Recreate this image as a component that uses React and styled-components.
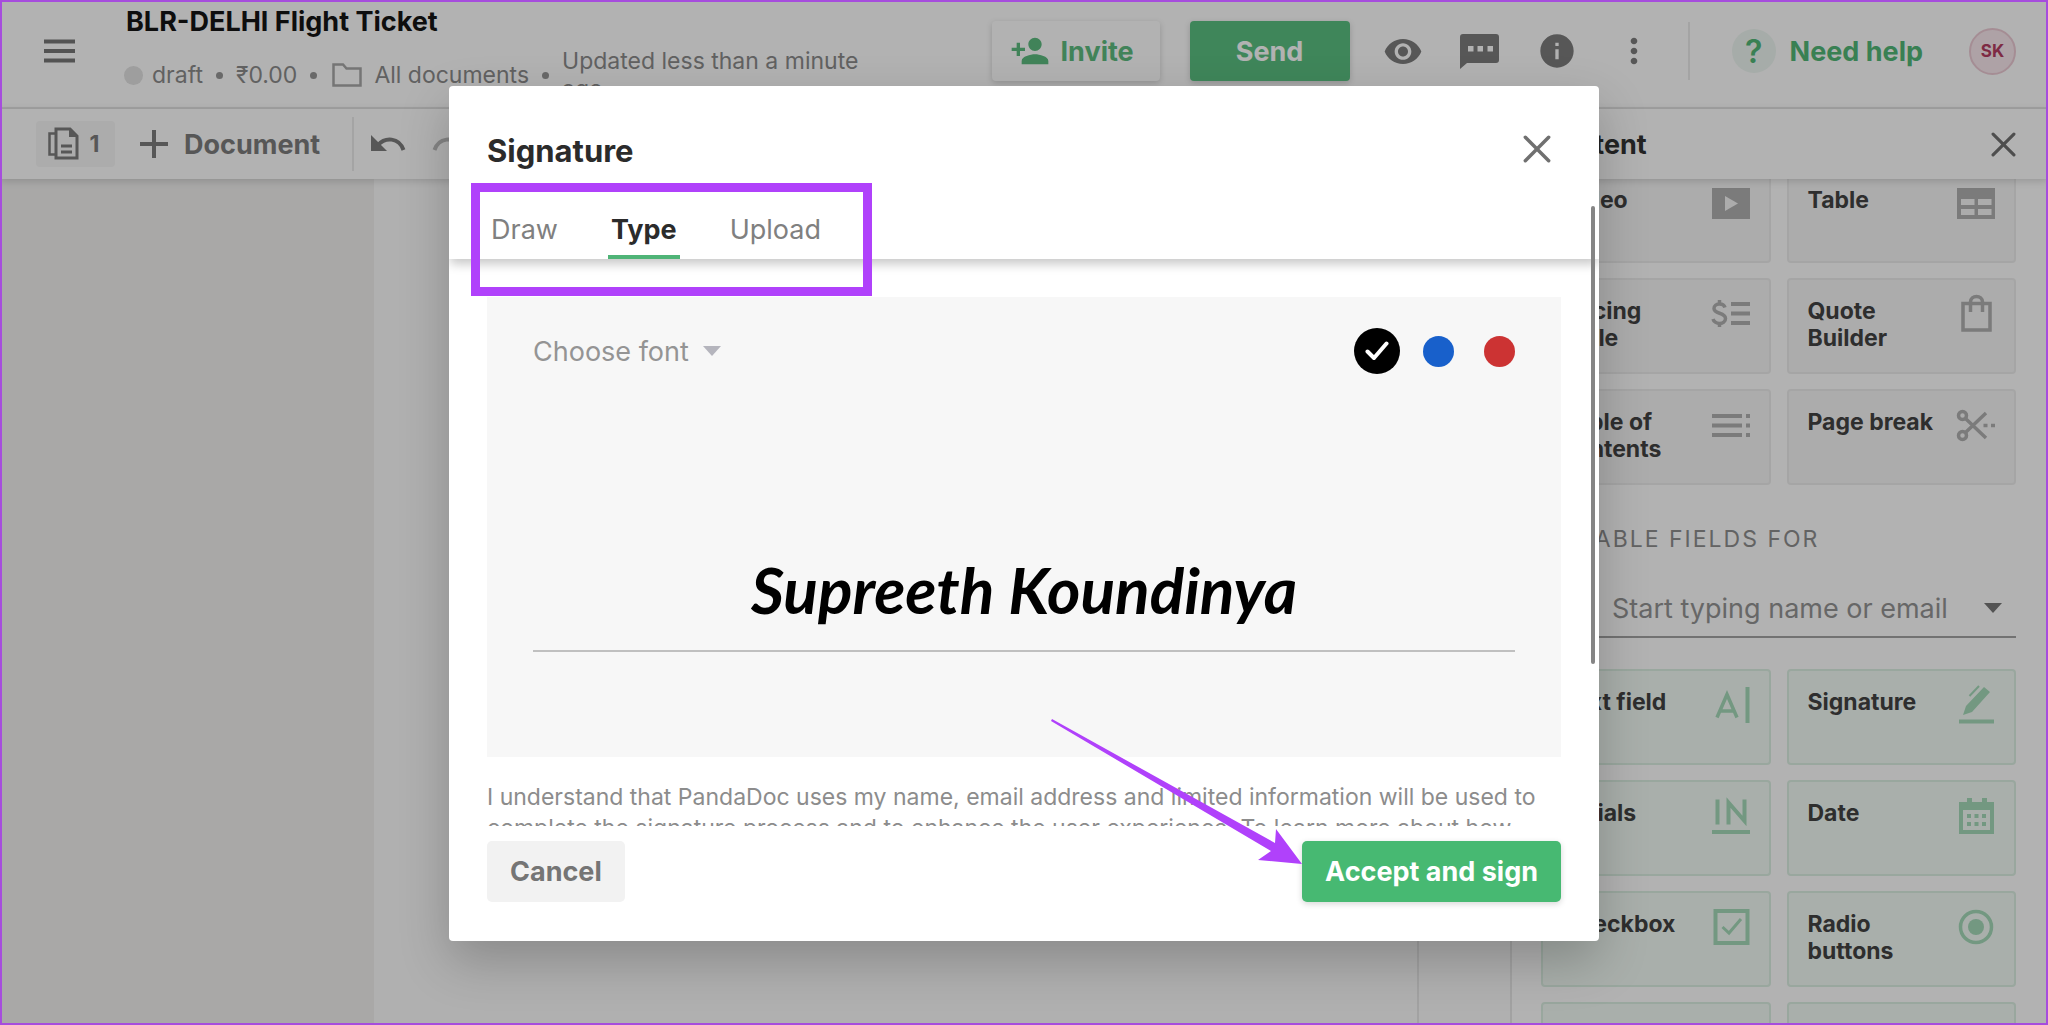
import React, { useState } from "react";
import styled, { createGlobalStyle, css } from "styled-components";
import { MdVisibility, MdInfo, MdMoreVert, MdPersonAdd } from "react-icons/md";

const GlobalStyle = createGlobalStyle`
  *, *::before, *::after { box-sizing: border-box; }
  html, body, #root { height: 100%; }
  body { margin: 0; overflow: hidden; font-family: Inter, "Liberation Sans", sans-serif; color: #333; }
  button, input, select { font: inherit; color: inherit; }
  button { background: none; border: 0; padding: 0; cursor: pointer; }
  h1, h2, p { margin: 0; }
`;

const Frame = styled.div`
  position: relative;
  height: 100vh;
  display: flex;
  flex-direction: column;
  background: #fff;
  overflow: hidden;
  &::after {
    content: "";
    position: absolute;
    inset: 0;
    border: 2px solid #a64ddd;
    pointer-events: none;
    z-index: 5;
  }
`;

const Header = styled.header`
  display: flex;
  align-items: flex-start;
  height: 109px;
  flex: none;
  padding: 0 32px 0 36px;
  border-bottom: 2px solid #e8e8e8;
`;

const MenuButton = styled.button`
  display: flex;
  margin: 28px 42px 0 0;
  color: #777;
`;

const TitleBlock = styled.div`
  display: flex;
  flex-direction: column;
  gap: 6px;
  padding-top: 6px;
  flex: 1;
  min-width: 0;
`;

const DocTitle = styled.h1`
  font-size: 27px;
  line-height: 32px;
  font-weight: 700;
  color: #151515;
`;

const Meta = styled.div`
  display: flex;
  align-items: center;
  height: 62px;
  font-size: 23px;
  line-height: 28px;
  color: #8c8c8c;
  white-space: nowrap;
`;

const StatusDot = styled.span`
  width: 19px;
  height: 19px;
  margin: 0 9px 0 -2px;
  border-radius: 50%;
  background: #e2e2e2;
`;

const Bullet = styled.span`
  width: 7px;
  height: 7px;
  margin: 0 13px;
  border-radius: 50%;
  background: #979797;
`;

const FolderLink = styled.a`
  display: flex;
  align-items: center;
  gap: 12px;
  margin-left: 2px;
  color: inherit;
  text-decoration: none;
`;

const Updated = styled.span`
  width: 320px;
  white-space: normal;
`;

const Actions = styled.div`
  display: flex;
  align-items: center;
  height: 102px;
  flex: none;
`;

const HeaderButton = styled.button`
  display: flex;
  align-items: center;
  justify-content: center;
  gap: 11px;
  height: 60px;
  width: ${(p) => (p.$primary ? 160 : 168)}px;
  padding-right: ${(p) => (p.$primary ? 0 : 8)}px;
  margin-right: ${(p) => (p.$primary ? 33 : 30)}px;
  border-radius: 4px;
  font-size: 27px;
  font-weight: 700;
  color: ${(p) => (p.$primary ? "#fff" : "#5dbc80")};
  background: ${(p) => (p.$primary ? "#5bc182" : "#fff")};
  box-shadow: 0 2px 6px rgba(0, 0, 0, 0.18);
`;

const IconGroup = styled.div`
  display: flex;
  gap: 37px;
  color: #7d7d7d;
`;

const IconButton = styled.button`
  display: flex;
  align-items: center;
  justify-content: center;
  width: 40px;
  height: 44px;
`;

const Divider = styled.span`
  width: 2px;
  height: ${(p) => p.$height}px;
  margin: ${(p) => p.$margin};
  background: #ebebeb;
`;

const HelpButton = styled.button`
  display: flex;
  align-items: center;
  gap: 14px;
  font-size: 27px;
  font-weight: 700;
  color: #52b878;
  white-space: nowrap;
`;

const HelpMark = styled.span`
  display: grid;
  place-items: center;
  width: 44px;
  height: 44px;
  border-radius: 50%;
  background: #eef7f2;
  font-size: 32px;
  font-weight: 600;
`;

const Avatar = styled.button`
  width: 47px;
  height: 47px;
  margin-left: 46px;
  border: 2px solid #eccbd5;
  border-radius: 50%;
  background: #f9e9ee;
  font-size: 17px;
  font-weight: 700;
  color: #b53d62;
`;

const Work = styled.div`
  display: flex;
  flex: 1;
  min-height: 0;
`;

const Editor = styled.div`
  display: flex;
  flex-direction: column;
  flex: 1;
  min-width: 0;
`;

const Toolbar = styled.div`
  display: flex;
  align-items: center;
  flex: none;
  height: 70px;
  padding-left: 36px;
  color: #7d7d7d;
  font-size: 27px;
  font-weight: 700;
  box-shadow: 0 2px 8px rgba(0, 0, 0, 0.16);
  z-index: 1;
`;

const PagesButton = styled.button`
  display: flex;
  align-items: center;
  justify-content: center;
  gap: 11px;
  width: 79px;
  height: 46px;
  padding-right: 4px;
  border-radius: 4px;
  background: #f6f6f6;
  font-size: 23px;
`;

const AddButton = styled.button`
  display: flex;
  align-items: center;
  gap: 16px;
  margin-left: 25px;
`;

const HistoryButton = styled.button`
  display: flex;
  margin-right: 26px;
  opacity: ${(p) => (p.disabled ? 0.5 : 1)};
`;

const Canvas = styled.main`
  display: flex;
  flex: 1;
  background: #f2f1f0;
`;

const Gutter = styled.div`
  width: 374px;
`;

const Paper = styled.div`
  flex: 1;
  background: #fdfdfd;
`;

const Rail = styled.div`
  width: 93px;
  background: #fdfdfd;
  border-left: 2px solid #e8e8e8;
`;

const Panel = styled.aside`
  display: flex;
  flex-direction: column;
  flex: none;
  width: 538px;
  border-left: 2px solid #e8e8e8;
`;

const PanelHead = styled.div`
  display: flex;
  align-items: center;
  justify-content: space-between;
  flex: none;
  height: 70px;
  padding: 0 32px 0 29px;
  box-shadow: 0 2px 8px rgba(0, 0, 0, 0.16);
  z-index: 1;
`;

const PanelTitle = styled.h2`
  font-size: 27px;
  font-weight: 700;
`;

const PanelBody = styled.div`
  flex: 1;
  overflow: hidden;
  padding: 0 32px 0 29px;
`;

const CardGrid = styled.div`
  display: grid;
  grid-template-columns: 1fr 1fr;
  gap: 15px 16px;
  margin-top: ${(p) => (p.$scrolled ? "-12px" : "31px")};
`;

const Card = styled.button`
  display: flex;
  align-items: flex-start;
  justify-content: space-between;
  gap: 14px;
  height: 96px;
  padding: 18px 18px 0 19px;
  border: 2px solid ${(p) => (p.$field ? "#dcefe3" : "#ededed")};
  border-radius: 4px;
  background: ${(p) => (p.$field ? "#f2fbf5" : "#f7f7f7")};
  color: ${(p) => (p.$field ? "#a5dab9" : "#b0b0b0")};
  text-align: left;
`;

const CardArt = styled.svg`
  flex: none;
  width: 40px;
  height: 40px;
  margin-top: -4px;
`;

const CardLabel = styled.span`
  font-size: 23px;
  line-height: 27px;
  font-weight: 700;
  color: #434343;
`;

const FieldsFor = styled.label`
  display: block;
  margin-top: 40px;
  font-size: 23px;
  line-height: 28px;
  letter-spacing: 2px;
  color: #8f8f8f;
`;

const Recipient = styled.div`
  display: flex;
  align-items: center;
  height: 66px;
  margin-top: 19px;
  padding: 8px 14px 0 71px;
  border-bottom: 2px solid #a4a4a4;
  color: #777;
`;

const RecipientInput = styled.input`
  flex: 1;
  min-width: 0;
  border: 0;
  padding: 0;
  background: none;
  font-size: 27px;
  outline: none;
  &::placeholder { color: #949494; opacity: 1; }
`;

const Overlay = styled.div`
  position: absolute;
  inset: 0;
  display: flex;
  align-items: center;
  justify-content: center;
  padding: 86px 5% 84px;
  background: rgba(0, 0, 0, 0.3);
  z-index: 2;
`;

const Modal = styled.section`
  position: relative;
  display: flex;
  flex-direction: column;
  width: 100%;
  max-width: 1150px;
  max-height: 100%;
  border-radius: 4px;
  background: #fff;
  box-shadow: 0 20px 50px rgba(0, 0, 0, 0.22);
`;

const ModalHead = styled.div`
  display: flex;
  align-items: center;
  justify-content: space-between;
  flex: none;
  height: 125px;
  padding: 0 48px 0 38px;
`;

const ModalTitle = styled.h2`
  padding-top: 4px;
  font-size: 31px;
  line-height: 36px;
  font-weight: 700;
  color: #2b2b2b;
`;

const CloseButton = styled.button`
  display: flex;
  color: #707070;
`;

const TabList = styled.div`
  display: flex;
  align-items: flex-end;
  gap: 47px;
  flex: none;
  height: 48px;
  padding-left: 39px;
  box-shadow: 0 6px 10px -1px rgba(0, 0, 0, 0.22);
  clip-path: inset(0 0 -20px 0);
  z-index: 1;
`;

const Tab = styled.button`
  height: 48px;
  padding: 0 3px 8px;
  font-size: 27px;
  color: #808080;
  border-bottom: 4px solid transparent;
  ${(p) =>
    p.$active &&
    css`
      font-weight: 700;
      color: #2b2b2b;
      border-bottom-color: #4fb477;
    `}
`;

const ModalBody = styled.div`
  flex: 1;
  min-height: 0;
  overflow: hidden;
  padding: 38px 38px 40px;
`;

const SignPad = styled.div`
  display: flex;
  flex-direction: column;
  height: 460px;
  padding: 30px 46px 0;
  background: #f7f7f7;
`;

const PadTools = styled.div`
  display: flex;
  align-items: center;
  justify-content: space-between;
  height: 48px;
`;

const FontPicker = styled.label`
  display: flex;
  align-items: center;
  gap: 14px;
  color: #b5b5bd;
`;

const FontSelect = styled.select`
  appearance: none;
  border: 0;
  padding: 0;
  background: none;
  font-size: 27px;
  color: #949494;
`;

const Swatches = styled.div`
  display: flex;
  align-items: center;
  gap: 30px;
`;

const Swatch = styled.label`
  display: grid;
  place-items: center;
  width: ${(p) => (p.$checked ? 46 : 31)}px;
  height: ${(p) => (p.$checked ? 46 : 31)}px;
  margin: ${(p) => (p.$checked ? "0 -7px" : "0")};
  border-radius: 50%;
  background: ${(p) => p.$color};
  color: #fff;
  cursor: pointer;
  input { position: absolute; opacity: 0; width: 1px; height: 1px; margin: 0; }
`;

const SignatureInput = styled.input`
  width: 100%;
  margin-top: 148px;
  height: 129px;
  border: 0;
  border-bottom: 2px solid #c0c0c0;
  padding: 6px 0 0;
  background: none;
  outline: none;
  text-align: center;
  font-family: Lato, "Liberation Sans", cursive;
  font-style: italic;
  font-weight: 700;
  font-size: 64px;
  color: #000;
`;

const Consent = styled.p`
  margin-top: 25px;
  font-size: 23px;
  line-height: 31px;
  color: #8c8c8c;
`;

const ModalFoot = styled.div`
  display: flex;
  align-items: flex-start;
  justify-content: space-between;
  flex: none;
  padding: 15px 38px 39px;
`;

const FootButton = styled.button`
  height: 61px;
  padding: 0 23px;
  border-radius: 5px;
  font-size: 27px;
  font-weight: 700;
  color: ${(p) => (p.$primary ? "#fff" : "#757575")};
  background: ${(p) => (p.$primary ? "#47b972" : "#f2f2f2")};
  box-shadow: ${(p) => (p.$primary ? "0 2px 6px rgba(0, 0, 0, 0.16)" : "none")};
`;

const ScrollThumb = styled.span`
  position: absolute;
  top: 120px;
  right: 4px;
  width: 4px;
  height: 458px;
  border-radius: 2px;
  background: #858585;
  z-index: 2;
`;

const Highlight = styled.div`
  position: absolute;
  top: 97px;
  left: 22px;
  width: 401px;
  height: 113px;
  border: 9px solid #b041fb;
  pointer-events: none;
  z-index: 3;
`;

const Pointer = styled.svg`
  position: absolute;
  right: 296px;
  bottom: 76px;
  pointer-events: none;
  z-index: 3;
`;

const Close = ({ size }) => (
  <svg width={size} height={size} viewBox="0 0 24 24" fill="none" stroke="currentColor" strokeWidth="3" strokeLinecap="round" aria-hidden="true">
    <path d="M2 2 22 22M22 2 2 22" />
  </svg>
);

const Caret = () => (
  <svg width="18" height="10" viewBox="0 0 18 10" fill="currentColor" aria-hidden="true">
    <path d="M0 0h18L9 10z" />
  </svg>
);

const Tick = () => (
  <svg width="24" height="20" viewBox="0 0 24 20" fill="none" stroke="#fff" strokeWidth="4" strokeLinecap="round" strokeLinejoin="round" aria-hidden="true">
    <path d="M2.500 10.500 9 17 21.500 2.500" />
  </svg>
);

const Chat = () => (
  <svg width="39" height="35" viewBox="0 0 39 35" aria-hidden="true">
    <path d="M3 0h33a3 3 0 0 1 3 3v23a3 3 0 0 1-3 3H7l-7 6V3a3 3 0 0 1 3-3z" fill="currentColor" />
    <path d="M8 12h5.500v5.500H8zM17.500 12H23v5.500h-5.500zM27.500 12H33v5.500h-5.500z" fill="#fff" />
  </svg>
);

const Folder = () => (
  <svg width="30" height="24" viewBox="0 0 30 24" fill="none" stroke="#a8a8a8" strokeWidth="2.500" aria-hidden="true">
    <path d="M1.500 1.500h9.500l3.500 4h14v17h-27z" />
  </svg>
);

const Pages = () => (
  <svg width="31" height="34" viewBox="0 0 31 34" fill="none" stroke="currentColor" strokeWidth="3" aria-hidden="true">
    <path d="M8 2h14l7 7v22H8z" />
    <path d="M21 1v9h9z" fill="currentColor" stroke="none" />
    <path d="M8 6.500H1.500V27.500H8" strokeWidth="2.500" />
    <path d="M13 19h11M13 25h11" />
  </svg>
);

const Plus = () => (
  <svg width="28" height="28" viewBox="0 0 28 28" stroke="currentColor" strokeWidth="4" aria-hidden="true">
    <path d="M14 0v28M0 14h28" />
  </svg>
);

const Undo = ({ flip }) => (
  <svg width="36" height="20" viewBox="0 0 36 20" aria-hidden="true">
    <g transform={flip ? "translate(36 0) scale(-1 1)" : undefined}>
      <path d="M1 1v16h16z" fill="currentColor" />
      <path d="M8 11C15 3 29 3 33.500 16" fill="none" stroke="currentColor" strokeWidth="4" />
    </g>
  </svg>
);

const art = {
  video: (
    <>
      <path d="M1 5h38v31H1z" fill="currentColor" />
      <path d="M14 13v15l13-7.500z" fill="#f7f7f7" />
    </>
  ),
  table: (
    <>
      <path d="M1 5h38v31H1z" fill="currentColor" />
      <path d="M5 16h13.500v6H5zM22 16h13.500v6H22zM5 26h13.500v6H5zM22 26h13.500v6H22z" fill="#f7f7f7" />
    </>
  ),
  pricing: (
    <g fill="none" stroke="currentColor" strokeWidth="4">
      <path d="M20 10h19M20 19.500h19M20 29h19" />
      <path d="M14 13.500C12.500 8.500 3 9 3 14.500c0 6 11.500 3.500 11.500 10 0 6.500-11 6.500-12.500.5M8.500 6v4M8.500 29v4" strokeWidth="3.500" />
    </g>
  ),
  quote: (
    <g fill="none" stroke="currentColor" strokeWidth="3.500">
      <path d="M7 9.500h27V36H7z" />
      <path d="M14.500 18V8c0-7.500 12-7.500 12 0v10" />
    </g>
  ),
  toc: (
    <g fill="none" stroke="currentColor" strokeWidth="4">
      <path d="M1 11h30M1 20.500h30M1 30h30M35 11h4M35 20.500h4M35 30h4" />
    </g>
  ),
  scissors: (
    <g fill="none" stroke="currentColor" strokeWidth="3.500">
      <circle cx="6.500" cy="10.500" r="4" />
      <circle cx="6.500" cy="30.500" r="4" />
      <path d="M9.500 13.500 30 33M9.500 27.500 30 8" />
      <path d="M27.500 20.500h4M35 20.500h4" />
    </g>
  ),
  text: (
    <g fill="none" stroke="currentColor" strokeWidth="4">
      <path d="M36.500 2v36" />
      <path d="M6 32.500 16 9.500 26 32.500M9.500 26h13" strokeWidth="3.500" />
    </g>
  ),
  signature: (
    <>
      <path d="M3 34.500h35v4H3zM7 30l3-9L28 2l6 5-18 20z" fill="currentColor" />
      <path d="M13.500 11 23 1" stroke="currentColor" strokeWidth="2" />
    </>
  ),
  initials: (
    <g fill="none" stroke="currentColor" strokeWidth="4">
      <path d="M1 36h38M6.500 3.500v25M17.500 28.500v-22L33.500 25V3.500" />
    </g>
  ),
  date: (
    <>
      <path d="M3 6h8V2h5v4h10V2h5v4h7v32H3z" fill="currentColor" />
      <path d="M7 14h27v20H7z" fill="#f2fbf5" />
      <path d="M11 18h4v4h-4zM18.500 18h4v4h-4zM26 18h4v4h-4zM11 26h4v4h-4zM18.500 26h4v4h-4zM26 26h4v4h-4z" fill="currentColor" />
    </>
  ),
  checkbox: (
    <g fill="none" stroke="currentColor" strokeWidth="4">
      <path d="M4.500 4h32v32h-32z" />
      <path d="M11.500 20 18 26 30 12" strokeWidth="3" />
    </g>
  ),
  radio: (
    <>
      <circle cx="20" cy="20" r="15.500" fill="none" stroke="currentColor" strokeWidth="3.500" />
      <circle cx="20" cy="20" r="8" fill="currentColor" />
    </>
  ),
};

const CardIcon = ({ name }) => (
  <CardArt viewBox="0 0 40 40" aria-hidden="true">
    {art[name]}
  </CardArt>
);

const blocks = [
  ["Video", "video"], ["Table", "table"],
  ["Pricing table", "pricing"], ["Quote Builder", "quote"],
  ["Table of contents", "toc"], ["Page break", "scissors"],
];

const fields = [
  ["Text field", "text"], ["Signature", "signature"],
  ["Initials", "initials"], ["Date", "date"],
  ["Checkbox", "checkbox"], ["Radio buttons", "radio"],
  ["", null], ["", null],
];

const colors = [
  ["Black", "#000"], ["Blue", "#1860cb"], ["Red", "#cc3333"],
];

export default function App() {
  const [tab, setTab] = useState("Type");
  const [color, setColor] = useState("Black");
  const [name, setName] = useState("Supreeth Koundinya");

  return (
    <Frame>
      <GlobalStyle />
      <Header>
        <MenuButton aria-label="Menu">
          <svg width="48" height="46" viewBox="0 0 48 46" stroke="currentColor" strokeWidth="4" aria-hidden="true">
            <path d="M8 13.500h31M8 23h31M8 32.500h31" />
          </svg>
        </MenuButton>
        <TitleBlock>
          <DocTitle>BLR-DELHI Flight Ticket</DocTitle>
          <Meta>
            <StatusDot />
            <span>draft</span>
            <Bullet />
            <span>₹0.00</span>
            <Bullet />
            <FolderLink href="#documents"><Folder />All documents</FolderLink>
            <Bullet />
            <Updated>Updated less than a minute ago</Updated>
          </Meta>
        </TitleBlock>
        <Actions>
          <HeaderButton><MdPersonAdd size={40} />Invite</HeaderButton>
          <HeaderButton $primary>Send</HeaderButton>
          <IconGroup>
            <IconButton aria-label="Preview"><MdVisibility size={41} /></IconButton>
            <IconButton aria-label="Comments"><Chat /></IconButton>
            <IconButton aria-label="Details"><MdInfo size={42} /></IconButton>
            <IconButton aria-label="More"><MdMoreVert size={46} /></IconButton>
          </IconGroup>
          <Divider $height={58} $margin="0 42px 0 34px" />
          <HelpButton><HelpMark>?</HelpMark>Need help</HelpButton>
          <Avatar aria-label="Account">SK</Avatar>
        </Actions>
      </Header>
      <Work>
        <Editor>
          <Toolbar>
            <PagesButton aria-label="Pages"><Pages />1</PagesButton>
            <AddButton><Plus />Document</AddButton>
            <Divider $height={54} $margin="0 16px 0 32px" />
            <HistoryButton aria-label="Undo"><Undo /></HistoryButton>
            <HistoryButton aria-label="Redo" disabled><Undo flip /></HistoryButton>
          </Toolbar>
          <Canvas>
            <Gutter />
            <Paper />
            <Rail />
          </Canvas>
        </Editor>
        <Panel>
          <PanelHead>
            <PanelTitle>Content</PanelTitle>
            <CloseButton aria-label="Close panel"><Close size={25} /></CloseButton>
          </PanelHead>
          <PanelBody>
            <CardGrid $scrolled>
              {blocks.map(([label, icon]) => (
                <Card key={label}>
                  <CardLabel>{label}</CardLabel>
                  <CardIcon name={icon} />
                </Card>
              ))}
            </CardGrid>
            <FieldsFor htmlFor="recipient">FILLABLE FIELDS FOR</FieldsFor>
            <Recipient>
              <RecipientInput id="recipient" placeholder="Start typing name or email" />
              <Caret />
            </Recipient>
            <CardGrid>
              {fields.map(([label, icon], i) => (
                <Card key={i} $field>
                  <CardLabel>{label}</CardLabel>
                  {icon && <CardIcon name={icon} />}
                </Card>
              ))}
            </CardGrid>
          </PanelBody>
        </Panel>
      </Work>
      <Overlay>
        <Modal role="dialog" aria-labelledby="signature-title">
          <ModalHead>
            <ModalTitle id="signature-title">Signature</ModalTitle>
            <CloseButton aria-label="Close"><Close size={28} /></CloseButton>
          </ModalHead>
          <TabList role="tablist">
            {["Draw", "Type", "Upload"].map((t) => (
              <Tab key={t} role="tab" aria-selected={tab === t} $active={tab === t} onClick={() => setTab(t)}>
                {t}
              </Tab>
            ))}
          </TabList>
          <ModalBody>
            <SignPad>
              <PadTools>
                <FontPicker>
                  <FontSelect aria-label="Choose font" defaultValue="">
                    <option value="">Choose font</option>
                  </FontSelect>
                  <Caret />
                </FontPicker>
                <Swatches>
                  {colors.map(([label, value]) => (
                    <Swatch key={label} $color={value} $checked={color === label}>
                      <input type="radio" name="ink" aria-label={label} checked={color === label} onChange={() => setColor(label)} />
                      {color === label && <Tick />}
                    </Swatch>
                  ))}
                </Swatches>
              </PadTools>
              <SignatureInput aria-label="Your signature" value={name} onChange={(e) => setName(e.target.value)} />
            </SignPad>
            <Consent>
              I understand that PandaDoc uses my name, email address and limited information will be used to
              complete the signature process and to enhance the user experience. To learn more about how
            </Consent>
          </ModalBody>
          <ModalFoot>
            <FootButton>Cancel</FootButton>
            <FootButton $primary>Accept and sign</FootButton>
          </ModalFoot>
          <ScrollThumb />
          <Highlight />
          <Pointer width="252" height="146" viewBox="0 0 252 146" aria-hidden="true">
            <path d="M1 0 224 124 225 110 251 145 207 141 220 132 0 2z" fill="#b041fb" />
          </Pointer>
        </Modal>
      </Overlay>
    </Frame>
  );
}
